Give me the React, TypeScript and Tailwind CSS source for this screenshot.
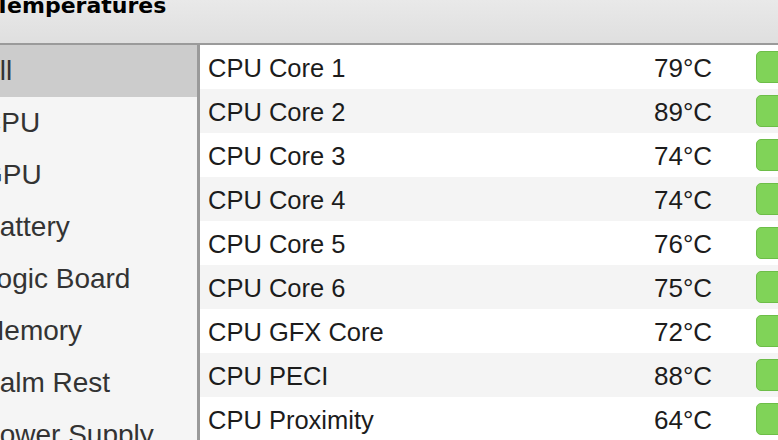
const categories = [
  "All",
  "CPU",
  "GPU",
  "Battery",
  "Logic Board",
  "Memory",
  "Palm Rest",
  "Power Supply",
];

const sensors: { name: string; temp: number }[] = [
  { name: "CPU Core 1", temp: 79 },
  { name: "CPU Core 2", temp: 89 },
  { name: "CPU Core 3", temp: 74 },
  { name: "CPU Core 4", temp: 74 },
  { name: "CPU Core 5", temp: 76 },
  { name: "CPU Core 6", temp: 75 },
  { name: "CPU GFX Core", temp: 72 },
  { name: "CPU PECI", temp: 88 },
  { name: "CPU Proximity", temp: 64 },
];

const sans = "font-['Liberation_Sans',Arial,sans-serif]";

export default function App() {
  return (
    <div className={`flex h-[440px] w-[778px] flex-col overflow-hidden bg-white ${sans}`}>
      {/* window title strip */}
      <div className="h-[45px] shrink-0 border-b-2 border-[#9a9a9a] bg-gradient-to-b from-[#e9e9e9] to-[#dfdfdf]">
        <div className="-ml-[5px] -mt-[5px] font-['DejaVu_Sans',sans-serif] text-[22px] font-bold leading-[22px] text-black">
          Temperatures
        </div>
      </div>

      <div className="flex min-h-0 flex-1">
        {/* source list */}
        <div className="w-[200px] shrink-0 border-r-[3px] border-[#9a9a9a] bg-[#f5f5f5]">
          {categories.map((c, i) => (
            <div
              key={c}
              className={`flex h-[52px] items-center whitespace-nowrap text-[28px] text-[#333] ${
                i === 0 ? "bg-[#cccccc]" : ""
              }`}
            >
              <span className="-ml-[19px]">{c}</span>
            </div>
          ))}
        </div>

        {/* sensor table */}
        <div className="min-w-0 flex-1">
          {sensors.map((s, i) => (
            <div
              key={s.name}
              className={`flex h-[44px] items-center text-[#1c1c1c] ${
                i % 2 === 1 ? "bg-[#f4f4f4]" : "bg-white"
              }`}
            >
              <span className="w-[454px] shrink-0 pl-[8px] pt-[3px] text-[25.5px]">{s.name}</span>
              <span className="w-[102px] shrink-0 pt-[3px] text-[26px]">{s.temp}°C</span>
              <span className="h-[32px] w-[40px] shrink-0 rounded-[5px] border border-[#6dbd48] bg-[#80d358]" />
            </div>
          ))}
        </div>
      </div>
    </div>
  );
}
